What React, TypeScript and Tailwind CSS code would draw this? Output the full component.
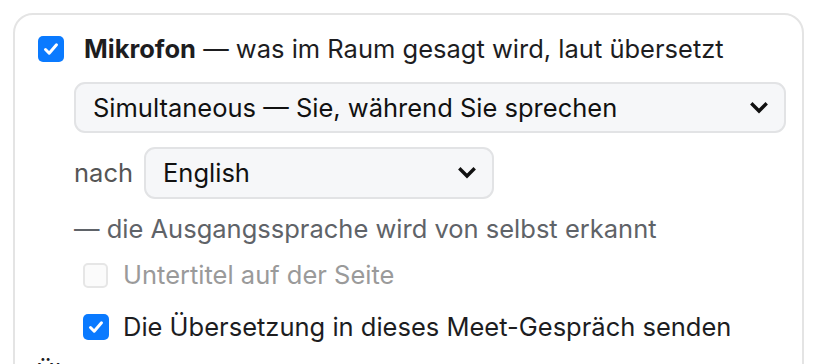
import React from "react";

function Check({ checked, disabled }: { checked?: boolean; disabled?: boolean }) {
  if (checked) {
    return (
      <div className="w-[26px] h-[26px] rounded-[5px] bg-[#0a7aff] flex items-center justify-center shrink-0">
        <svg width="18" height="18" viewBox="0 0 18 18" fill="none">
          <path d="M3.5 9.5 L7.2 13.2 L14.5 4.8" stroke="white" strokeWidth="3" strokeLinecap="round" strokeLinejoin="round" />
        </svg>
      </div>
    );
  }
  return (
    <div
      className={
        "w-[25px] h-[25px] rounded-[5px] border-2 shrink-0 " +
        (disabled ? "border-[#e6e6e6] bg-[#fbfbfb]" : "border-[#bbb] bg-white")
      }
    />
  );
}

function Chevron() {
  return (
    <svg width="18" height="12" viewBox="0 0 18 12" fill="none">
      <path d="M2.5 2.5 L9 9 L15.5 2.5" stroke="#111" strokeWidth="3.4" strokeLinecap="square" strokeLinejoin="miter" />
    </svg>
  );
}

function Select({ value, className }: { value: string; className: string }) {
  return (
    <div
      className={
        "relative flex items-center rounded-[11px] border-2 border-[#e2e3e5] bg-[#f6f7f9] pl-[17px] pr-[16px] text-[25.5px] text-[#111] " +
        className
      }
    >
      <span className="flex-1 leading-[28px]">{value}</span>
      <Chevron />
    </div>
  );
}

export default function App() {
  return (
    <div
      className="w-[816px] h-[364px] overflow-hidden bg-white pt-[13px] pl-[13px]"
      style={{ fontFamily: "Inter, 'Noto Sans', sans-serif" }}
    >
      <div className="w-[791px] h-[400px] rounded-[20px] border-2 border-[#e4e4e4] pt-[20px] pl-[23px]">
        <div className="flex items-center h-[28px]">
          <Check checked />
          <div className="ml-[20px] text-[25.5px] leading-[28px] text-[#1d1d1f]">
            <span className="font-bold">Mikrofon</span> — was im Raum gesagt wird, laut übersetzt
          </div>
        </div>
        <div className="ml-[36px]">
          <Select value="Simultaneous — Sie, während Sie sprechen" className="mt-[19px] w-[712px] h-[51px]" />
          <div className="mt-[14px] flex items-center">
            <span className="text-[25.5px] leading-[28px] text-[#555] mr-[11px]">nach</span>
            <Select value="English" className="w-[350px] h-[52px]" />
          </div>
          <div className="mt-[16px] text-[25.5px] leading-[28px] text-[#5f6368]">
            — die Ausgangssprache wird von selbst erkannt
          </div>
          <div className="ml-[9px] mt-[18px] flex items-center h-[28px]">
            <Check disabled />
            <span className="ml-[15px] text-[25.5px] leading-[28px] text-[#9a9a9a]">Untertitel auf der Seite</span>
          </div>
          <div className="ml-[9px] mt-[24px] flex items-center h-[28px]">
            <Check checked />
            <span className="ml-[14px] text-[25.5px] leading-[28px] text-[#1d1d1f]">
              Die Übersetzung in dieses Meet-Gespräch senden
            </span>
          </div>
        </div>
        <div className="-ml-[2px] mt-[18px] text-[25.5px] leading-[28px] text-[#1d1d1f]">Über</div>
      </div>
    </div>
  );
}
